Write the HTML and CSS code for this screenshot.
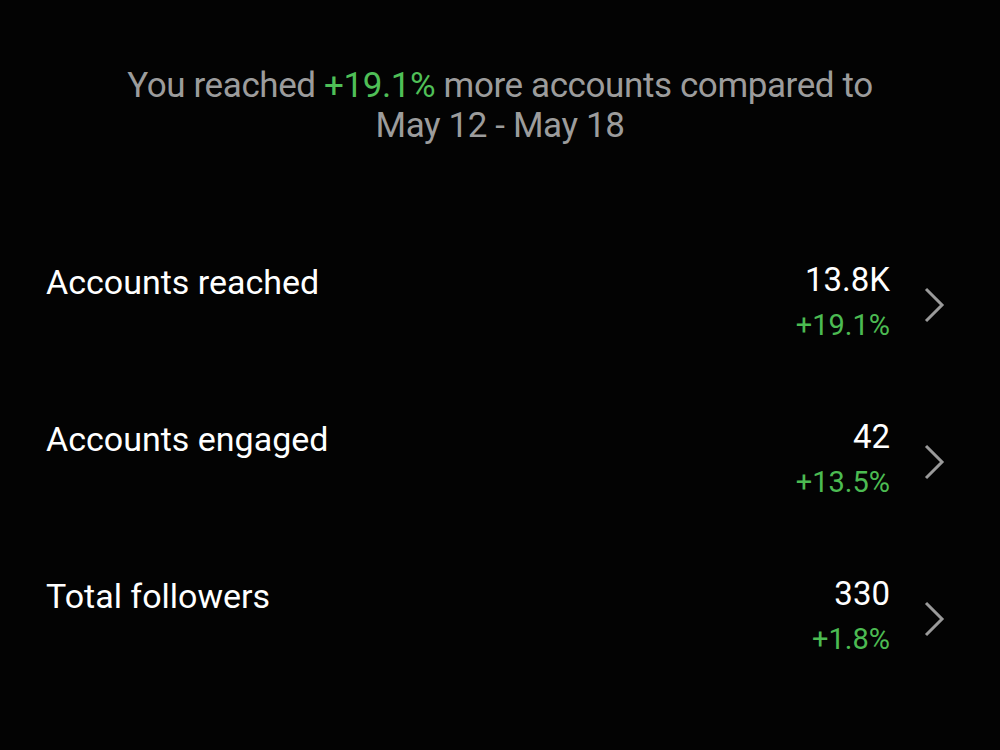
FILE: index.html
```html
<!DOCTYPE html>
<html lang="en">
<head>
  <meta charset="UTF-8">
  <meta name="viewport" content="width=device-width, initial-scale=1.0">
  <title>Insights Overview</title>
  <link rel="stylesheet" href="styles.css">
</head>
<body>
  <div class="summary">
    You reached <span class="up">+19.1%</span> more accounts compared to<br>
    May 12 - May 18
  </div>

  <div class="metrics">
    <div class="metric">
      <div class="label">Accounts reached</div>
      <div class="values">
        <div class="value">13.8K</div>
        <div class="change">+19.1%</div>
      </div>
      <svg class="chevron" viewBox="0 0 24 40"><path d="M4 4 L20 20 L4 36"/></svg>
    </div>

    <div class="metric">
      <div class="label">Accounts engaged</div>
      <div class="values">
        <div class="value">42</div>
        <div class="change">+13.5%</div>
      </div>
      <svg class="chevron" viewBox="0 0 24 40"><path d="M4 4 L20 20 L4 36"/></svg>
    </div>

    <div class="metric">
      <div class="label">Total followers</div>
      <div class="values">
        <div class="value">330</div>
        <div class="change">+1.8%</div>
      </div>
      <svg class="chevron" viewBox="0 0 24 40"><path d="M4 4 L20 20 L4 36"/></svg>
    </div>
  </div>
</body>
</html>
```

FILE: styles.css
```css
body {
  margin: 0;
  background-color: #030303;
  font-family: Roboto, 'Noto Sans', sans-serif;
  color: #fff;
  width: 1000px;
  height: 750px;
  overflow: hidden;
}

.summary {
  text-align: center;
  color: #9c9c9c;
  font-size: 35px;
  line-height: 40px;
  letter-spacing: -0.4px;
  padding-top: 66px;
}

.summary .up {
  color: #4fbf57;
}

.metrics {
  padding: 114px 0 0 46px;
}

.metric {
  display: flex;
  align-items: flex-start;
  height: 157px;
}

.label {
  flex: 1;
  font-size: 34px;
  line-height: 40px;
  margin-top: 2px;
}

.values {
  text-align: right;
}

.value {
  font-size: 33px;
  line-height: 40px;
}

.change {
  color: #4cbb52;
  font-size: 29px;
  line-height: 36px;
  margin-top: 7px;
}

.chevron {
  width: 24px;
  height: 40px;
  margin: 25px 54px 0 32px;
  fill: none;
  stroke: #9a9a9a;
  stroke-width: 3;
}
```
